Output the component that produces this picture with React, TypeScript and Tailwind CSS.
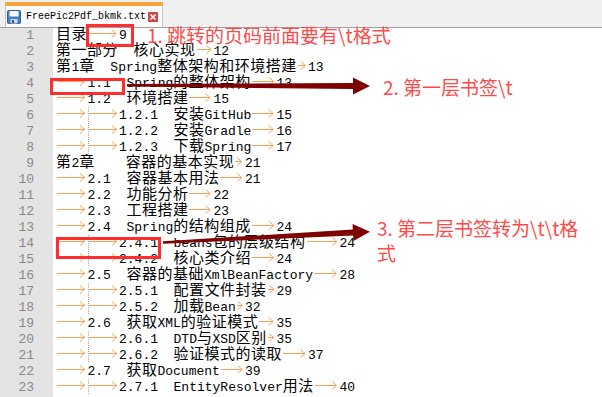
const lines = [
  "目录\t9",
  "第一部分　核心实现\t12",
  "第1章　Spring整体架构和环境搭建\t13",
  "\t1.1　Spring的整体架构\t13",
  "\t1.2　环境搭建\t15",
  "\t\t1.2.1　安装GitHub\t15",
  "\t\t1.2.2　安装Gradle\t16",
  "\t\t1.2.3　下载Spring\t17",
  "第2章　　容器的基本实现\t21",
  "\t2.1　容器基本用法\t21",
  "\t2.2　功能分析\t22",
  "\t2.3　工程搭建\t23",
  "\t2.4　Spring的结构组成\t24",
  "\t\t2.4.1　beans包的层级结构\t24",
  "\t\t2.4.2　核心类介绍\t24",
  "\t2.5　容器的基础XmlBeanFactory\t28",
  "\t\t2.5.1　配置文件封装\t29",
  "\t\t2.5.2　加载Bean\t32",
  "\t2.6　获取XML的验证模式\t35",
  "\t\t2.6.1　DTD与XSD区别\t35",
  "\t\t2.6.2　验证模式的读取\t37",
  "\t2.7　获取Document\t39",
  "\t\t2.7.1　EntityResolver用法\t40",
];

const Tab = ({ guide }: { guide: boolean }) => (
  <span className="relative">
    {"\t"}
    <svg className="absolute left-0 top-[-1px] h-4 w-[calc(100%-3px)] overflow-visible">
      {guide && <line x1="0.5" y1="0" x2="0.5" y2="16" stroke="#a8a8a8" strokeDasharray="1 1" />}
      <line x1="1" y1="6.5" x2="100%" y2="6.5" stroke="#f6a35a" strokeWidth="1" />
      <svg x="100%" y="0" overflow="visible">
        <polyline points="-4.5,2.5 0,6.5 -4.5,10.5" fill="none" stroke="#f6a35a" strokeWidth="1" />
      </svg>
    </svg>
  </span>
);

const CodeLine = ({ text }: { text: string }) => {
  const parts = text.split(/(\t|[\u3000-\u9fff\uff00-\uffef]+)/).filter(Boolean);
  let tabs = 0;
  return (
    <div className="h-4 whitespace-pre">
      {parts.map((p, i) => {
        if (p === "\t") {
          tabs += 1;
          return <Tab key={i} guide={tabs === 2 && i === 1} />;
        }
        if (/[\u3000-\u9fff\uff00-\uffef]/.test(p)) {
          return (
            <span key={i} className="font-['Noto_Sans_CJK_SC',sans-serif] text-[15px] leading-[10px] tracking-[0.5px]">
              {p}
            </span>
          );
        }
        return <span key={i}>{p}</span>;
      })}
    </div>
  );
};

const FloppyIcon = () => (
  <svg width="14" height="14" viewBox="0 0 14 14" className="shrink-0">
    <rect x="0.5" y="0.5" width="13" height="13" rx="1" fill="#4b7ec0" stroke="#2d5b96" />
    <rect x="2.5" y="1" width="9" height="5.5" fill="#f4f7fb" />
    <rect x="3.5" y="9" width="7" height="4.5" fill="#c9d7ea" />
    <rect x="5" y="10" width="2" height="3" fill="#2d5b96" />
  </svg>
);

const CloseIcon = () => (
  <svg width="10" height="10" viewBox="0 0 10 10" className="shrink-0">
    <rect x="0" y="0" width="10" height="10" rx="1" fill="#c64a48" />
    <path d="M2.5 2.5 L7.5 7.5 M7.5 2.5 L2.5 7.5" stroke="#fff" strokeWidth="1.6" />
  </svg>
);

export default function App() {
  return (
    <div className="relative flex h-[397px] w-[602px] flex-col overflow-hidden bg-white">
      <div className="flex h-[28px] shrink-0 items-end border-b border-[#a0a0a0] bg-[#f0f0f0] pl-[5px]">
        <div className="flex h-[25px] w-[158px] items-center gap-[5px] border-x border-t-[4px] border-x-[#c4c4c4] border-t-[#f9a33c] bg-[#fbfbfb] pl-px">
          <FloppyIcon />
          <span className="font-['Liberation_Mono',monospace] text-[10px] leading-none text-black">FreePic2Pdf_bkmk.txt</span>
          <div className="-ml-[3px]">
            <CloseIcon />
          </div>
        </div>
      </div>

      <div className="flex flex-1">
        <div className="w-[53px] shrink-0 bg-[#e4e4e4] font-['Liberation_Mono',monospace] text-[13px] leading-4 text-[#8a8a8a]">
          {lines.map((_, i) => (
            <div key={i} className="h-4 pr-[19px] text-right">
              {i + 1}
            </div>
          ))}
        </div>
        <div className="flex-1 pl-[3px] font-['Liberation_Mono','Noto_Sans_CJK_SC',monospace] text-[13px] leading-4 text-black [tab-size:31.5px]">
          {lines.map((l, i) => (
            <CodeLine key={i} text={l} />
          ))}
        </div>
      </div>

      {/* annotations drawn on top of the editor */}
      <div className="pointer-events-none absolute inset-0">
        <div className="absolute left-[86px] top-[24px] h-[23px] w-[48px] border-[3px] border-[#ff2d2d]" />
        <div className="absolute left-[50px] top-[78px] h-[17px] w-[75px] border-[3px] border-[#ff2d2d]" />
        <div className="absolute left-[56px] top-[237px] h-[22px] w-[105px] border-[3px] border-[#ff2d2d]" />

        <svg className="absolute inset-0" width="602" height="397">
          <polygon points="127,84 353,83 353,77.5 370,86 353,94.5 353,89 127,86.5" fill="#7f0000" />
          <polygon
            points="163,241.3 352.8,229.6 352.6,224.1 370,231.7 353.4,241.1 353.2,235.6 163,243.7"
            fill="#7f0000"
          />
        </svg>

        <div className="absolute left-[147px] top-[23px] font-['Noto_Sans_CJK_SC',sans-serif] text-[19px] leading-[24px] whitespace-nowrap text-[#ff4a4a]">
          {"1. 跳转的页码前面要有\\t格式"}
        </div>
        <div className="absolute left-[383px] top-[75px] font-['Noto_Sans_CJK_SC',sans-serif] text-[19px] leading-[24px] whitespace-nowrap text-[#ff4a4a]">
          {"2. 第一层书签\\t"}
        </div>
        <div className="absolute left-[377px] top-[216px] font-['Noto_Sans_CJK_SC',sans-serif] text-[19px] leading-[24.5px] whitespace-nowrap text-[#ff4a4a]">
          {"3. 第二层书签转为\\t\\t格"}
          <br />
          {"式"}
        </div>
      </div>
    </div>
  );
}
